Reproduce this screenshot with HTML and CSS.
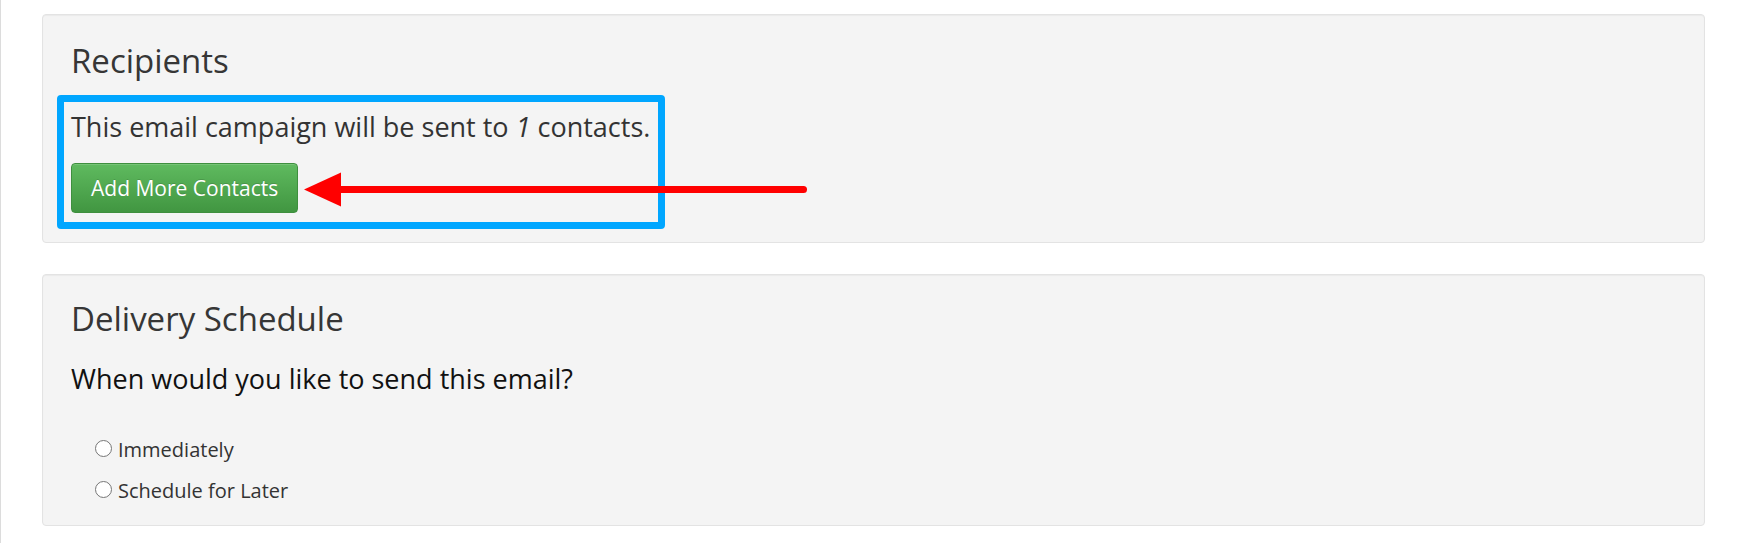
FILE: index.html
```html
<!DOCTYPE html>
<html lang="en">
<head>
    <meta charset="UTF-8">
    <meta name="viewport" content="width=device-width, initial-scale=1.0">
    <title>Email Campaign - Review</title>
    <link rel="stylesheet" href="styles.css">
</head>
<body>
    <div class="page">
        <section class="well well-recipients">
            <h3 class="well-title">Recipients</h3>
            <p class="recipient-count">This email campaign will be sent to <em>1</em> contacts.</p>
            <a href="#" class="btn btn-success">Add More Contacts</a>

            <!-- annotation overlays -->
            <div class="callout-box"></div>
            <svg class="callout-arrow" width="510" height="40" viewBox="0 0 510 40">
                <line x1="40" y1="19.5" x2="503.5" y2="19.5" stroke="#ff0000" stroke-width="7" stroke-linecap="round"/>
                <polygon points="4,19.5 41,2.5 41,36.5" fill="#ff0000"/>
            </svg>
        </section>

        <section class="well well-schedule">
            <h3 class="well-title">Delivery Schedule</h3>
            <p class="question">When would you like to send this email?</p>
            <div class="radio-list">
                <label class="radio">
                    <input type="radio" name="send_time" value="now">
                    <span>Immediately</span>
                </label>
                <label class="radio">
                    <input type="radio" name="send_time" value="later">
                    <span>Schedule for Later</span>
                </label>
            </div>
        </section>
    </div>
</body>
</html>
```

FILE: styles.css
```css
* {
    margin: 0;
    padding: 0;
    box-sizing: border-box;
    font-family: 'Open Sans', 'Liberation Sans', sans-serif;
}

:root {
    --text-color: #333333;
    --well-bg: #f4f4f4;
    --well-border: #e3e3e3;
    --callout-blue: #00a6ff;
    --callout-red: #ff0000;
}

html, body {
    min-height: 100%;
}

body {
    min-height: 100vh;
    background-color: #ffffff;
    color: var(--text-color);
    border-left: 1px solid #dcdcdc;
}

.page {
    padding: 14px 41px 0 41px;
}

.well {
    position: relative;
    background-color: var(--well-bg);
    border: 1px solid var(--well-border);
    border-radius: 4px;
    box-shadow: inset 0 1px 1px rgba(0, 0, 0, 0.04);
    padding: 28px 28px 29px 28px;
    margin-bottom: 31px;
}

.well-title {
    font-size: 33px;
    line-height: 35px;
    font-weight: 400;
    color: #363636;
    margin-bottom: 29px;
}

.recipient-count {
    font-size: 27px;
    line-height: 40px;
    margin-bottom: 16px;
}

.btn {
    display: inline-block;
    font-size: 21px;
    line-height: 32px;
    padding: 8px 19px;
    border-radius: 4px;
    text-decoration: none;
}

.btn-success {
    color: #ffffff;
    background-image: linear-gradient(to bottom, #5fba5f 0%, #419641 100%);
    border: 1px solid #3e8f3e;
    text-shadow: 0 -1px 0 rgba(0, 0, 0, 0.15);
    box-shadow: inset 0 1px 0 rgba(255, 255, 255, 0.15);
}

.callout-box {
    position: absolute;
    left: 14px;
    top: 80px;
    width: 608px;
    height: 134px;
    border: 7px solid var(--callout-blue);
    border-radius: 4px;
}

.callout-arrow {
    position: absolute;
    left: 257px;
    top: 155px;
}

.well-schedule {
    padding: 26px 28px 19px 28px;
}

.well-schedule .well-title {
    margin-bottom: 23px;
}

.question {
    font-size: 27px;
    line-height: 40px;
    color: #111111;
    margin-bottom: 36px;
}

.radio-list {
    display: flex;
    flex-direction: column;
    gap: 11px;
    padding-left: 24px;
}

.radio {
    display: flex;
    align-items: flex-start;
    gap: 6px;
    font-size: 20px;
    line-height: 30px;
    color: var(--text-color);
}

.radio input {
    appearance: none;
    -webkit-appearance: none;
    width: 17px;
    height: 17px;
    margin-top: 5px;
    border: 1px solid #767676;
    border-radius: 50%;
    background-color: #ffffff;
}
```
